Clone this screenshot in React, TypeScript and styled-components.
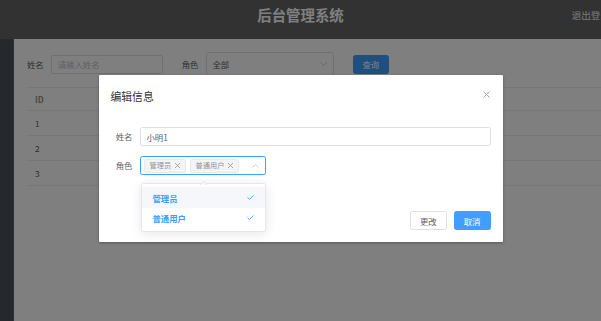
import React from "react";
import styled, { createGlobalStyle } from "styled-components";

const GlobalStyle = createGlobalStyle`
  html, body {
    margin: 0;
    padding: 0;
    width: 601px;
    height: 321px;
    overflow: hidden;
  }
  body {
    font-family: "Noto Sans CJK SC", "Noto Sans", sans-serif;
  }
  * {
    box-sizing: border-box;
  }
`;

const Page = styled.div`
  position: relative;
  width: 601px;
  height: 321px;
  display: flex;
  flex-direction: column;
  background: #fff;
  overflow: hidden;
`;

const Header = styled.header`
  flex: none;
  height: 39px;
  padding-bottom: 8px;
  display: grid;
  grid-template-columns: 1fr auto 1fr;
  align-items: center;
  background: #656565;
  color: #fff;
`;

const Title = styled.h1`
  grid-column: 2;
  margin: 0;
  font-size: 14.4px;
  line-height: 1;
  font-weight: 700;
`;

const Logout = styled.span`
  justify-self: end;
  margin-right: -9px;
  font-size: 9.6px;
  line-height: 1;
  white-space: nowrap;
  color: #f2f2f2;
`;

const Body = styled.div`
  flex: 1;
  display: flex;
  min-height: 0;
`;

const Sidebar = styled.aside`
  flex: none;
  width: 14px;
  background: #4a5058;
  border-right: 1px solid #5a6068;
`;

const Main = styled.main`
  flex: 1;
  min-width: 0;
  padding: 13px 0 0 13px;
`;

const SearchBar = styled.div`
  display: flex;
  align-items: center;
  height: 24px;
`;

const SearchLabel = styled.label<{ $gap?: number }>`
  margin-left: ${(p) => p.$gap ?? 0}px;
  margin-right: 7px;
  font-size: 8.4px;
  color: #606266;
  white-space: nowrap;
`;

const TextInput = styled.input<{ $width?: number }>`
  ${(p) => (p.$width ? `width: ${p.$width}px;` : "flex: 1;")}
  height: 19px;
  padding: 0 6px;
  border: 1px solid #dcdfe6;
  border-radius: 2.4px;
  outline: none;
  font-family: inherit;
  font-size: 8.4px;
  color: #606266;
  background: #fff;

  &::placeholder {
    color: #c0c4cc;
  }
`;

const PlainSelect = styled.div`
  width: 128px;
  height: 24px;
  padding: 0 6px;
  display: flex;
  align-items: center;
  justify-content: space-between;
  border: 1px solid #dcdfe6;
  border-radius: 2.4px;
  font-size: 8.4px;
  color: #606266;
`;

const Button = styled.button<{ $primary?: boolean; $gap?: number }>`
  margin-left: ${(p) => p.$gap ?? 0}px;
  height: 19px;
  padding: 0 9px;
  border: 1px solid ${(p) => (p.$primary ? "#409eff" : "#dcdfe6")};
  border-radius: 2.4px;
  background: ${(p) => (p.$primary ? "#409eff" : "#fff")};
  color: ${(p) => (p.$primary ? "#fff" : "#606266")};
  font-family: inherit;
  font-size: 8.4px;
  line-height: 1;
  white-space: nowrap;
  cursor: pointer;
`;

const Table = styled.div`
  margin-top: 11px;
  border-top: 1px solid #ebeef5;
`;

const TableRow = styled.div<{ $head?: boolean }>`
  display: grid;
  grid-template-columns: 150px 150px 1fr;
  align-items: center;
  height: ${(p) => (p.$head ? 23 : 25)}px;
  border-bottom: 1px solid #ebeef5;
  font-size: 8.4px;
  font-weight: ${(p) => (p.$head ? 700 : 400)};
  color: ${(p) => (p.$head ? "#909399" : "#606266")};
`;

const Cell = styled.div`
  padding-left: 8px;
  white-space: nowrap;
`;

const Mask = styled.div`
  position: absolute;
  inset: 0;
  display: flex;
  justify-content: center;
  align-items: flex-start;
  padding-top: 75px;
  background: rgba(0, 0, 0, 0.5);
`;

const Dialog = styled.div`
  width: 404px;
  background: #fff;
  border-radius: 1px;
  box-shadow: 0 1px 3px rgba(0, 0, 0, 0.3);
`;

const DialogHeader = styled.div`
  display: flex;
  justify-content: space-between;
  align-items: flex-start;
  padding: 14px 13px 6px 12px;
`;

const DialogTitle = styled.span`
  font-size: 10.8px;
  line-height: 14.4px;
  color: #303133;
`;

const CloseButton = styled.button`
  margin-top: 2px;
  padding: 0;
  width: 7px;
  height: 7px;
  border: none;
  background: none;
  display: flex;
  cursor: pointer;
`;

const DialogBody = styled.div`
  padding: 18px 12px 30px;
`;

const FormItem = styled.div`
  display: flex;
  align-items: center;
  margin-bottom: 10px;

  &:last-child {
    margin-bottom: 0;
  }
`;

const FormLabel = styled.label`
  flex: none;
  width: 29px;
  padding-right: 7px;
  text-align: right;
  font-size: 8.4px;
  line-height: 19px;
  color: #606266;
  white-space: nowrap;
`;

const SelectWrap = styled.div`
  position: relative;
`;

const MultiSelect = styled.div`
  width: 126px;
  height: 19px;
  padding-left: 3px;
  display: flex;
  align-items: center;
  gap: 4px;
  border: 1px solid #409eff;
  border-radius: 2.4px;
`;

const Tag = styled.span`
  height: 14px;
  padding: 0 3.5px 0 5px;
  display: inline-flex;
  align-items: center;
  gap: 3px;
  background: #f4f4f5;
  border: 1px solid #e9e9eb;
  border-radius: 2.4px;
  font-size: 7.2px;
  line-height: 1;
  color: #909399;
  white-space: nowrap;
`;

const Arrow = styled.span`
  margin-left: auto;
  margin-right: 6px;
  display: flex;
`;

const Dropdown = styled.ul`
  position: absolute;
  top: calc(100% + 8px);
  left: 1px;
  right: 0;
  margin: 0;
  padding: 3px 0;
  list-style: none;
  background: #fff;
  border: 1px solid #e4e7ed;
  border-radius: 2.4px;
  box-shadow: 0 2px 12px rgba(0, 0, 0, 0.1);

  &::before {
    content: "";
    position: absolute;
    top: -2.5px;
    left: calc(50% - 2px);
    width: 4px;
    height: 4px;
    background: #fff;
    border-top: 1px solid #e4e7ed;
    border-left: 1px solid #e4e7ed;
    transform: rotate(45deg);
  }
`;

const Option = styled.li<{ $hover?: boolean }>`
  height: 20.4px;
  padding: 0 11px;
  display: flex;
  align-items: center;
  justify-content: space-between;
  background: ${(p) => (p.$hover ? "#f5f7fa" : "#fff")};
  font-size: 8.4px;
  font-weight: 700;
  color: #409eff;
`;

const DialogFooter = styled.div`
  display: flex;
  justify-content: flex-end;
  gap: 7px;
  padding: 6px 12px 12px;
`;

const ChevronDown = () => (
  <svg width="7" height="4" viewBox="0 0 7 4" fill="none">
    <polyline points="0.5,0.5 3.5,3.5 6.5,0.5" stroke="#c0c4cc" strokeWidth="0.8" />
  </svg>
);

const ChevronUp = () => (
  <svg width="7" height="4" viewBox="0 0 7 4" fill="none">
    <polyline points="0.5,3.5 3.5,0.5 6.5,3.5" stroke="#c0c4cc" strokeWidth="0.8" />
  </svg>
);

const TagClose = () => (
  <svg width="7" height="7" viewBox="0 0 7 7" fill="none">
    <path d="M1 1L6 6M6 1L1 6" stroke="#909399" strokeWidth="0.8" />
  </svg>
);

const Check = () => (
  <svg width="7" height="5" viewBox="0 0 7 5" fill="none">
    <polyline points="0.5,2.5 2.5,4.3 6.5,0.5" stroke="#409eff" strokeWidth="0.9" />
  </svg>
);

const users = [
  { id: 1, name: "小明1", roles: "管理员" },
  { id: 2, name: "小明2", roles: "普通用户" },
  { id: 3, name: "小明3", roles: "普通用户" },
];

export default function App() {
  return (
    <Page>
      <GlobalStyle />
      <Header>
        <Title>后台管理系统</Title>
        <Logout>退出登录</Logout>
      </Header>
      <Body>
        <Sidebar />
        <Main>
          <SearchBar>
            <SearchLabel>姓名</SearchLabel>
            <TextInput $width={112} placeholder="请输入姓名" readOnly />
            <SearchLabel $gap={19}>角色</SearchLabel>
            <PlainSelect>
              <span>全部</span>
              <ChevronDown />
            </PlainSelect>
            <Button $primary $gap={19}>查询</Button>
          </SearchBar>
          <Table>
            <TableRow $head>
              <Cell>ID</Cell>
              <Cell>姓名</Cell>
              <Cell>角色</Cell>
            </TableRow>
            {users.map((u) => (
              <TableRow key={u.id}>
                <Cell>{u.id}</Cell>
                <Cell>{u.name}</Cell>
                <Cell>{u.roles}</Cell>
              </TableRow>
            ))}
          </Table>
        </Main>
      </Body>

      <Mask>
        <Dialog>
          <DialogHeader>
            <DialogTitle>编辑信息</DialogTitle>
            <CloseButton aria-label="关闭">
              <svg width="7" height="7" viewBox="0 0 7 7" fill="none">
                <path d="M0.5 0.5L6.5 6.5M6.5 0.5L0.5 6.5" stroke="#909399" strokeWidth="0.8" />
              </svg>
            </CloseButton>
          </DialogHeader>
          <DialogBody>
            <FormItem>
              <FormLabel>姓名</FormLabel>
              <TextInput value="小明1" readOnly />
            </FormItem>
            <FormItem>
              <FormLabel>角色</FormLabel>
              <SelectWrap>
                <MultiSelect>
                  <Tag>
                    管理员
                    <TagClose />
                  </Tag>
                  <Tag>
                    普通用户
                    <TagClose />
                  </Tag>
                  <Arrow>
                    <ChevronUp />
                  </Arrow>
                </MultiSelect>
                <Dropdown>
                  <Option $hover>
                    管理员
                    <Check />
                  </Option>
                  <Option>
                    普通用户
                    <Check />
                  </Option>
                </Dropdown>
              </SelectWrap>
            </FormItem>
          </DialogBody>
          <DialogFooter>
            <Button>更改</Button>
            <Button $primary>取消</Button>
          </DialogFooter>
        </Dialog>
      </Mask>
    </Page>
  );
}
